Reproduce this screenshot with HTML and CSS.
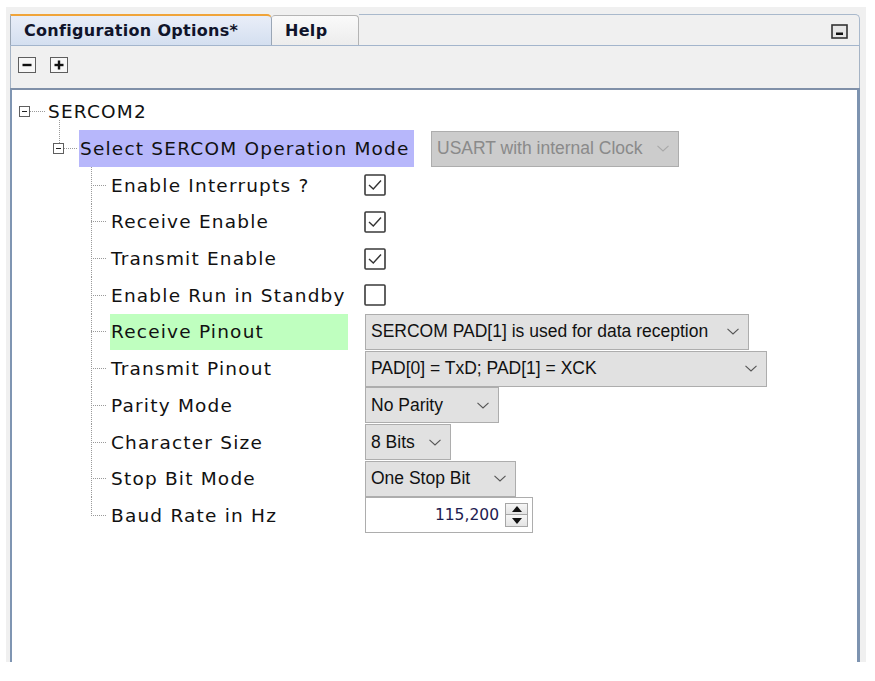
FILE: index.html
```html
<!DOCTYPE html>
<html>
<head>
<meta charset="utf-8">
<link rel="stylesheet" href="styles.css">
</head>
<body>
<div class="frame">
  <div class="panel">
    <div class="tabbar">
      <div class="tab tab-active">Configuration Options*</div>
      <div class="tab tab-help">Help</div>
      <div class="tabfill">
        <svg class="minimize" width="17" height="15" viewBox="0 0 17 15"><rect x="1" y="1" width="15" height="13" fill="#e6e6e6" stroke="#333" stroke-width="1.6"/><rect x="5" y="8.5" width="7" height="2.5" fill="#111"/></svg>
      </div>
    </div>
    <div class="toolbar">
      <span class="tbtn"><svg width="18" height="16" viewBox="0 0 18 16"><rect x="0.5" y="0.5" width="17" height="15" fill="#f7f7f7" stroke="#5e5e5e"/><rect x="4.5" y="6.8" width="9" height="2.4" fill="#111"/></svg></span>
      <span class="tbtn"><svg width="18" height="16" viewBox="0 0 18 16"><rect x="0.5" y="0.5" width="17" height="15" fill="#f7f7f7" stroke="#5e5e5e"/><rect x="4.5" y="6.8" width="9" height="2.4" fill="#111"/><rect x="7.8" y="3.5" width="2.4" height="9" fill="#111"/></svg></span>
    </div>
    <div class="content">
      <div class="tree">
        <div class="row lvl0">
          <span class="exp"></span><span class="conn0"></span><span class="label">SERCOM2</span>
        </div>
        <div class="row lvl1">
          <span class="exp"></span><span class="conn1"></span><span class="label hl-purple">Select SERCOM Operation Mode</span>
          <div class="combo disabled w-usart"><span>USART with internal Clock</span><svg class="chev" width="12" height="7" viewBox="0 0 12 7"><path d="M0.5 0.8 L6 6 L11.5 0.8" fill="none" stroke="#a8a8a8" stroke-width="1.1"/></svg></div>
        </div>
        <div class="group">
          <div class="row lvl2">
            <span class="conn2"></span><span class="label label2">Enable Interrupts ?</span>
            <span class="check"><svg width="22" height="22" viewBox="0 0 22 22"><rect x="1" y="1" width="20" height="20" rx="1" fill="#fff" stroke="#3a3a3a" stroke-width="1.6"/><path d="M5 11 L9.3 15 L17 6.5" fill="none" stroke="#333" stroke-width="1.4"/></svg></span>
          </div>
          <div class="row lvl2">
            <span class="conn2"></span><span class="label label2">Receive Enable</span>
            <span class="check"><svg width="22" height="22" viewBox="0 0 22 22"><rect x="1" y="1" width="20" height="20" rx="1" fill="#fff" stroke="#3a3a3a" stroke-width="1.6"/><path d="M5 11 L9.3 15 L17 6.5" fill="none" stroke="#333" stroke-width="1.4"/></svg></span>
          </div>
          <div class="row lvl2">
            <span class="conn2"></span><span class="label label2">Transmit Enable</span>
            <span class="check"><svg width="22" height="22" viewBox="0 0 22 22"><rect x="1" y="1" width="20" height="20" rx="1" fill="#fff" stroke="#3a3a3a" stroke-width="1.6"/><path d="M5 11 L9.3 15 L17 6.5" fill="none" stroke="#333" stroke-width="1.4"/></svg></span>
          </div>
          <div class="row lvl2">
            <span class="conn2"></span><span class="label label2">Enable Run in Standby</span>
            <span class="check"><svg width="22" height="22" viewBox="0 0 22 22"><rect x="1" y="1" width="20" height="20" rx="1" fill="#fff" stroke="#3a3a3a" stroke-width="1.6"/></svg></span>
          </div>
          <div class="row lvl2">
            <span class="conn2"></span><span class="label label2 hl-green">Receive Pinout</span>
            <div class="combo w-receive"><span>SERCOM PAD[1] is used for data reception</span><svg class="chev" width="12" height="7" viewBox="0 0 12 7"><path d="M0.5 0.8 L6 6 L11.5 0.8" fill="none" stroke="#555" stroke-width="1.1"/></svg></div>
          </div>
          <div class="row lvl2">
            <span class="conn2"></span><span class="label label2">Transmit Pinout</span>
            <div class="combo w-transmit"><span>PAD[0] = TxD; PAD[1] = XCK</span><svg class="chev" width="12" height="7" viewBox="0 0 12 7"><path d="M0.5 0.8 L6 6 L11.5 0.8" fill="none" stroke="#555" stroke-width="1.1"/></svg></div>
          </div>
          <div class="row lvl2">
            <span class="conn2"></span><span class="label label2">Parity Mode</span>
            <div class="combo w-parity"><span>No Parity</span><svg class="chev" width="12" height="7" viewBox="0 0 12 7"><path d="M0.5 0.8 L6 6 L11.5 0.8" fill="none" stroke="#555" stroke-width="1.1"/></svg></div>
          </div>
          <div class="row lvl2">
            <span class="conn2"></span><span class="label label2">Character Size</span>
            <div class="combo w-bits"><span>8 Bits</span><svg class="chev" width="12" height="7" viewBox="0 0 12 7"><path d="M0.5 0.8 L6 6 L11.5 0.8" fill="none" stroke="#555" stroke-width="1.1"/></svg></div>
          </div>
          <div class="row lvl2">
            <span class="conn2"></span><span class="label label2">Stop Bit Mode</span>
            <div class="combo w-stop"><span>One Stop Bit</span><svg class="chev" width="12" height="7" viewBox="0 0 12 7"><path d="M0.5 0.8 L6 6 L11.5 0.8" fill="none" stroke="#555" stroke-width="1.1"/></svg></div>
          </div>
          <div class="row lvl2 last">
            <span class="conn2"></span><span class="label label2">Baud Rate in Hz</span>
            <div class="spin">
              <span class="spin-value">115,200</span>
              <span class="spin-btns">
                <span class="spin-btn"><svg width="10" height="6" viewBox="0 0 10 6"><path d="M0 6 L5 0 L10 6 Z" fill="#111"/></svg></span>
                <span class="spin-btn"><svg width="10" height="6" viewBox="0 0 10 6"><path d="M0 0 L5 6 L10 0 Z" fill="#111"/></svg></span>
              </span>
            </div>
          </div>
        </div>
      </div>
    </div>
  </div>
</div>
</body>
</html>
```

FILE: styles.css
```css
html, body {
  margin: 0;
  padding: 0;
  background: #ffffff;
}

.frame {
  margin: 7px 0 0 6px;
  width: 860px;
  height: 655px;
  box-sizing: border-box;
  padding: 7px 6px 0 4px;
  background: #f0f0f0;
}

.panel {
  height: 648px;
  display: flex;
  flex-direction: column;
}

/* Tabs */
.tabbar {
  display: flex;
  height: 32px;
  box-sizing: border-box;
  border-bottom: 1px solid #a3b5cc;
  flex-shrink: 0;
}

.tab {
  box-sizing: border-box;
  display: flex;
  align-items: center;
  font-family: "DejaVu Sans", sans-serif;
  font-weight: bold;
  font-size: 16px;
  letter-spacing: 0.3px;
  color: #10142a;
  padding-left: 13px;
}

.tab-active {
  width: 262px;
  border-top: 2px solid #f0a43a;
  border-left: 1px solid #9aa6b5;
  border-right: 1px solid #9aa6b5;
  border-top-right-radius: 5px;
  background: linear-gradient(#e9eef8, #d4dff0);
}

.tab-help {
  width: 87px;
  margin-top: 1px;
  border-top: 1px solid #b4b4b4;
  border-right: 1px solid #b4b4b4;
  border-top-left-radius: 3px;
  border-top-right-radius: 4px;
  background: linear-gradient(#fafafa, #ececec);
}

.tabfill {
  flex: 1;
  box-sizing: border-box;
  border-top: 1px solid #a9b9cc;
  border-right: 1px solid #a9b9cc;
  border-top-right-radius: 5px;
  display: flex;
  align-items: center;
  justify-content: flex-end;
  padding-right: 11px;
}

.minimize {
  display: block;
  margin-top: 2px;
}

/* Toolbar */
.toolbar {
  height: 42px;
  box-sizing: border-box;
  border-left: 1px solid #a5b3c4;
  border-right: 1px solid #a5b3c4;
  display: flex;
  align-items: flex-start;
  gap: 14px;
  padding: 11px 0 0 7px;
  flex-shrink: 0;
}

.tbtn svg {
  display: block;
}

/* Content */
.content {
  flex: 1;
  background: #ffffff;
  border-top: 2px solid #8090a8;
  border-left: 2px solid #7f95b2;
  border-right: 3px solid #7d93b0;
}

.tree {
  padding-top: 3.5px;
  background-image: repeating-linear-gradient(to bottom, #9a9a9a 0 1px, transparent 1px 2px);
  background-repeat: no-repeat;
  background-position: 47px 30px;
  background-size: 1px 23px;
}

.row {
  height: 36.7px;
  display: flex;
  align-items: center;
}

.lvl0 { padding-left: 7px; }
.lvl1 { padding-left: 41px; }
.lvl2 { padding-left: 79px; }

.exp {
  width: 11px;
  height: 11px;
  box-sizing: border-box;
  border: 1px solid #5f5f5f;
  background: #fff;
  display: flex;
  align-items: center;
  justify-content: center;
  flex-shrink: 0;
}

.exp::before {
  content: "";
  width: 5px;
  height: 1px;
  background: #222;
}

.conn0, .conn1, .conn2 {
  align-self: stretch;
  flex-shrink: 0;
  background-repeat: no-repeat;
}

.conn0 {
  width: 18px;
  background-image: repeating-linear-gradient(to right, #9a9a9a 0 1px, transparent 1px 2px);
  background-position: 0 50%;
  background-size: 15px 1px;
}

.conn1 {
  width: 15px;
  background-image: repeating-linear-gradient(to right, #9a9a9a 0 1px, transparent 1px 2px);
  background-position: 0 50%;
  background-size: 14px 1px;
}

.conn2 {
  width: 19px;
  background-image:
    repeating-linear-gradient(to bottom, #9a9a9a 0 1px, transparent 1px 2px),
    repeating-linear-gradient(to right, #9a9a9a 0 1px, transparent 1px 2px);
  background-position: 0 0, 0 50%;
  background-size: 1px 100%, 16px 1px;
}

.last .conn2 {
  background-size: 1px 50%, 16px 1px;
}

.label {
  font-family: "DejaVu Sans", sans-serif;
  font-size: 18.5px;
  letter-spacing: 1.2px;
  color: #111;
  white-space: nowrap;
}

.hl-purple {
  width: 335px;
  box-sizing: border-box;
  align-self: stretch;
  display: flex;
  align-items: center;
  padding-left: 1px;
  background: #b7b7fb;
  margin-right: 17px;
}

.label2 {
  width: 238px;
  box-sizing: border-box;
  align-self: stretch;
  display: flex;
  align-items: center;
  padding-left: 1px;
  margin-right: 17px;
}

.hl-green {
  background: #bfffbf;
}

.check {
  margin-left: -1px;
  display: flex;
}

.check svg {
  display: block;
}

/* Combo boxes */
.combo {
  height: 36px;
  box-sizing: border-box;
  border: 1px solid #adadad;
  background: #e1e1e1;
  display: flex;
  align-items: center;
  justify-content: space-between;
  padding: 0 9px 0 5px;
  font-family: "Liberation Sans", Arial, sans-serif;
  font-size: 17.5px;
  color: #111;
  white-space: nowrap;
  flex-shrink: 0;
}

.combo.disabled {
  background: #cccccc;
  color: #8a8a8a;
}

.chev {
  display: block;
  flex-shrink: 0;
}

.w-usart { width: 248px; }
.w-receive { width: 384px; }
.w-transmit { width: 402px; }
.w-parity { width: 134px; }
.w-bits { width: 86px; }
.w-stop { width: 151px; }

/* Spinner */
.spin {
  width: 168px;
  height: 36px;
  box-sizing: border-box;
  border: 1px solid #adadad;
  background: #fff;
  display: flex;
  align-items: center;
  justify-content: flex-end;
  padding-right: 4px;
  gap: 6px;
}

.spin-value {
  font-family: "DejaVu Sans", sans-serif;
  font-size: 15.5px;
  color: #1e2050;
}

.spin-btns {
  display: flex;
  flex-direction: column;
  width: 23px;
}

.spin-btn {
  height: 12px;
  box-sizing: border-box;
  border: 1px solid #a6a6a6;
  background: linear-gradient(#f6f6f6, #e4e4e4);
  display: flex;
  align-items: center;
  justify-content: center;
}

.spin-btn + .spin-btn {
  border-top: none;
  height: 12px;
}

.spin-btn svg {
  display: block;
}
```
